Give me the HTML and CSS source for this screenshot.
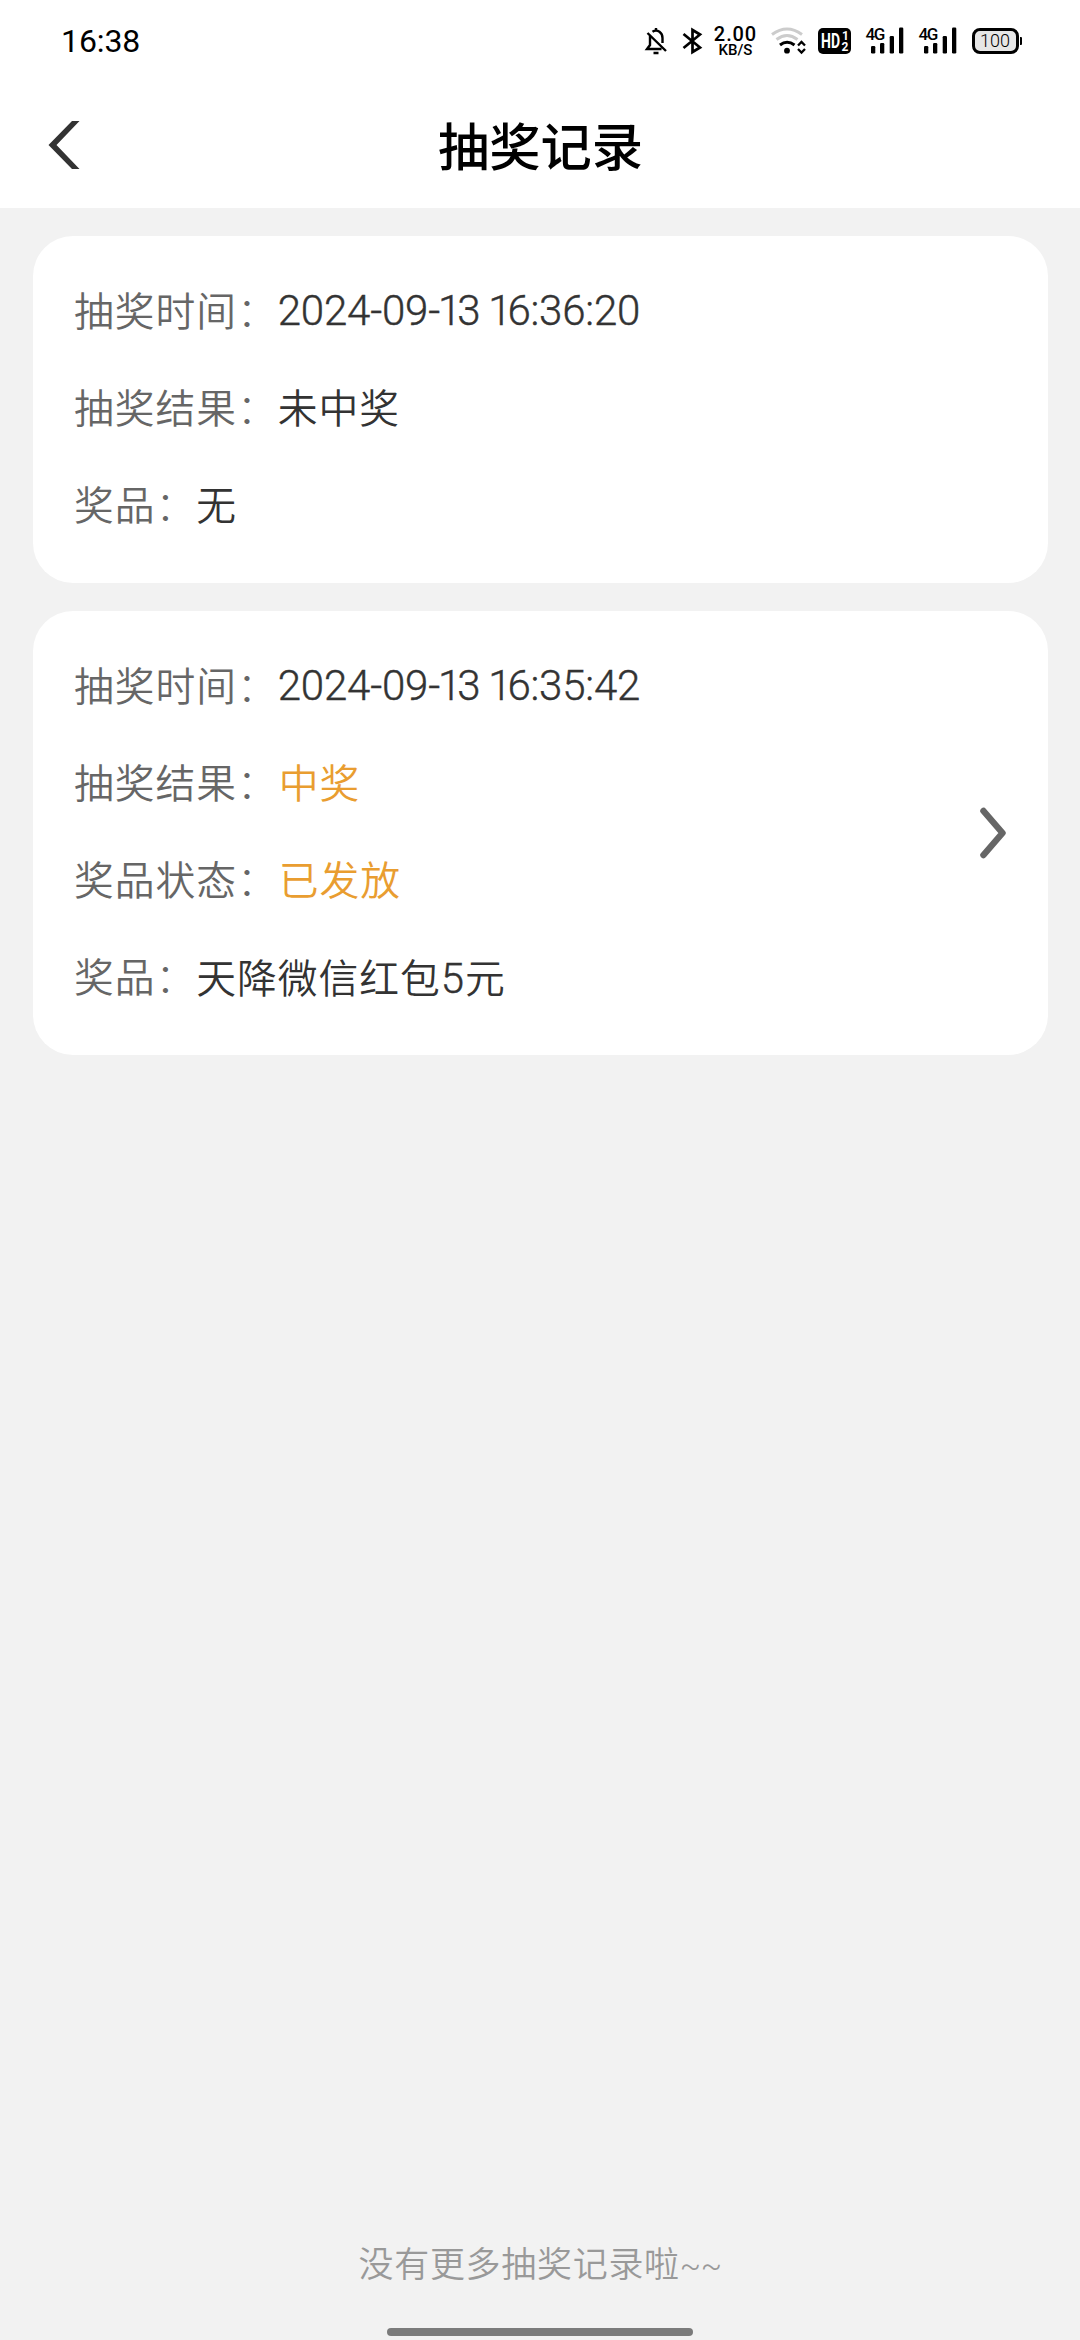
FILE: index.html
```
<!DOCTYPE html>
<html lang="zh-CN">
<head>
<meta charset="utf-8">
<title>抽奖记录</title>
<link rel="stylesheet" href="styles.css">
</head>
<body>
<div class="screen">
  <header class="top">
    <div class="status">
      <span class="clock">16:38</span>
      <div class="indicators">
        <svg class="ic" width="24" height="30" viewBox="642 26 24 30" fill="none" stroke="#000" stroke-width="2.4">
          <path d="M650.5 31.8Q654 29.4 657.5 31.8Q660.5 34 660.5 38V43M648 35.5V45L645 49H659.5M645.5 33L664 51"/>
          <path d="M654 28v3M651.5 53h5"/>
        </svg>
        <svg class="ic ic-bt" width="22" height="30" viewBox="680 26 22 30" fill="none" stroke="#000" stroke-width="2.7">
          <path d="M681.5 34L698 47.5L690.5 52V30L698 34.5L681.5 48"/>
        </svg>
        <div class="speed"><span class="speed-num">2.00</span><span class="speed-unit">KB/S</span></div>
        <svg class="ic ic-wifi" width="36" height="30" viewBox="769 26 36 30" fill="none">
          <path d="M771 34.5Q786 23.5 801 34.5" stroke="#ccc" stroke-width="3"/>
          <path d="M775.5 39.5Q786 31.5 796.5 39.5" stroke="#ccc" stroke-width="3"/>
          <path d="M779 45Q786 39.5 793.5 45" stroke="#000" stroke-width="3"/>
          <circle cx="786" cy="50.7" r="2.9" fill="#000"/>
          <path d="M797 45.5L800.5 42L804 45.5M797 49L800.5 52.5L804 49" stroke="#000" stroke-width="2.3"/>
        </svg>
        <svg class="hd" width="33" height="26" viewBox="0 0 33 26">
          <rect width="33" height="26" rx="5"/>
          <text class="hd-word" x="3" y="20" textLength="19" lengthAdjust="spacingAndGlyphs">HD</text>
          <text class="hd-sim" x="24" y="12">1</text>
          <text class="hd-sim" x="23.500" y="22.500">2</text>
        </svg>
        <div class="cell">
          <span class="cell-gen">4G</span>
          <svg class="cell-bars" width="38" height="28" viewBox="866 27 38 28">
            <rect x="871" y="46" width="4.3" height="7.5" rx="1.2"/><rect x="880" y="43" width="4.3" height="10.5" rx="1.2"/><rect x="889.7" y="36" width="4.3" height="17.5" rx="1.2"/><rect x="899" y="27.5" width="4.3" height="26" rx="1.2"/>
          </svg>
        </div>
        <div class="cell">
          <span class="cell-gen">4G</span>
          <svg class="cell-bars" width="38" height="28" viewBox="866 27 38 28">
            <rect x="871" y="46" width="4.3" height="7.5" rx="1.2"/><rect x="880" y="43" width="4.3" height="10.5" rx="1.2"/><rect x="889.7" y="36" width="4.3" height="17.5" rx="1.2"/><rect x="899" y="27.5" width="4.3" height="26" rx="1.2"/>
          </svg>
        </div>
        <div class="battery"><span class="battery-body">100</span><span class="battery-tip"></span></div>
      </div>
    </div>
    <div class="nav">
      <svg class="back" width="32" height="50" viewBox="0 0 32 50"><path d="M24 1H31.5L8.500 25L31.5 49H24L0.500 25Z" fill="#333"/></svg>
      <h1 class="title">抽奖记录</h1>
    </div>
  </header>

  <main class="list">
    <section class="card">
      <div class="rows">
        <p class="row"><span class="label">抽奖时间<span class="colon">：</span></span><span class="value date">2024-09-<b class="one">1</b>3 <b class="one">1</b>6:36:20</span></p>
        <p class="row"><span class="label">抽奖结果<span class="colon">：</span></span><span class="value">未中奖</span></p>
        <p class="row"><span class="label">奖品<span class="colon">：</span></span><span class="value">无</span></p>
      </div>
    </section>
    <section class="card">
      <div class="rows">
        <p class="row"><span class="label">抽奖时间<span class="colon">：</span></span><span class="value date">2024-09-<b class="one">1</b>3 <b class="one">1</b>6:35:42</span></p>
        <p class="row"><span class="label">抽奖结果<span class="colon">：</span></span><span class="value win">中奖</span></p>
        <p class="row"><span class="label">奖品状态<span class="colon">：</span></span><span class="value win">已发放</span></p>
        <p class="row"><span class="label">奖品<span class="colon">：</span></span><span class="value">天降微信红包<span class="num">5</span>元</span></p>
      </div>
      <svg class="more" width="28" height="52" viewBox="0 0 28 52" fill="none" stroke="#666" stroke-width="6.5" stroke-linecap="round" stroke-linejoin="round"><path d="M4.500 4L23.500 26L4.500 48"/></svg>
    </section>
  </main>

  <footer class="foot">
    <p class="end">没有更多抽奖记录啦<span class="tilde">~~</span></p>
    <div class="home"></div>
  </footer>
</div>
</body>
</html>
```

FILE: styles.css
```
* { box-sizing: border-box; margin: 0; padding: 0; }

body { background: #f2f2f2; font-family: Roboto, "Noto Sans CJK SC", sans-serif; }

.screen { width: 1080px; height: 2340px; display: flex; flex-direction: column; overflow: hidden; }

.top { height: 208px; background: #fff; flex: none; }

/* status bar */
.status { height: 81px; padding: 0 58px 0 61px; display: flex; justify-content: space-between; align-items: center; color: #000; }
.clock { font-size: 32px; line-height: 40px; letter-spacing: -0.1px; }
.indicators { display: flex; align-items: center; height: 30px; }
.ic { flex: none; display: block; }
.ic-bt { margin-left: 14px; }
.speed { width: 44px; margin-left: 10px; display: flex; flex-direction: column; align-items: center; font-weight: 500; }
.speed-num { font-size: 20px; line-height: 18px; letter-spacing: 0.9px; }
.speed-unit { font-size: 15px; line-height: 14px; }
.ic-wifi { margin-left: 12px; }
.hd { margin-left: 12px; flex: none; }
.hd-word { font-size: 20px; font-weight: 700; fill: #fff; }
.hd-sim { font-size: 12px; font-weight: 700; fill: #fff; }
.cell { margin-left: 15px; width: 38px; height: 28px; position: relative; }
.cell-bars { display: block; }
.cell-gen { position: absolute; left: 0; top: -1px; font-size: 17px; line-height: 17px; font-weight: 500; letter-spacing: -1.5px; }
.battery { margin-left: 15px; display: flex; align-items: center; gap: 1px; }
.battery-body { width: 47px; height: 26px; border: 3px solid #000; border-radius: 8px; background: #e6e6e6; font-size: 18px; line-height: 20px; font-weight: 300; text-align: center; }
.battery-tip { width: 2.5px; height: 8px; background: #000; border-radius: 0 1px 1px 0; }

/* navigation bar */
.nav { height: 127px; padding: 0 47px 0 48px; display: grid; grid-template-columns: 32px 1fr 32px; }
.back { margin-top: 39px; }
.title { font-size: 51.3px; line-height: 76px; margin-top: 30px; text-align: center; font-weight: 500; color: #000; }

/* records */
.list { flex: 1; padding: 28px 32px 0 33px; display: flex; flex-direction: column; gap: 28px; }
.card { background: #fff; border-radius: 40px; padding: 28px 41px 27px 41px; display: flex; justify-content: space-between; align-items: center; }
.row { height: 97.3px; display: flex; align-items: center; font-size: 39.8px; letter-spacing: 0.95px; line-height: 60px; white-space: nowrap; font-weight: 350; }
.label { color: #666; }
.colon { font-weight: 300; }
.value { color: #333; }
.win { color: #e99d30; padding-left: 1px; }
.date { font-size: 42px; line-height: 56px; letter-spacing: -0.2px; font-weight: 300; padding-bottom: 4px; -webkit-text-stroke: 0.4px #333; }
.num { font-size: 42px; font-weight: 300; -webkit-text-stroke: 0.4px #333; }
.one { font-weight: inherit; margin: 0 -4px 0 -2px; }
.more { flex: none; }

/* footer */
.foot { flex: none; height: 107px; padding-top: 4px; margin-top: -4px; display: flex; flex-direction: column; align-items: center; }
.end { font-size: 35px; line-height: 50px; letter-spacing: 0.7px; color: #999; font-weight: 350; margin-top: 4px; }
.tilde { font-size: 31px; letter-spacing: -0.4px; }
.home { margin-top: 36px; width: 306px; height: 8px; border-radius: 4px; background: #7b7b7b; }
```
